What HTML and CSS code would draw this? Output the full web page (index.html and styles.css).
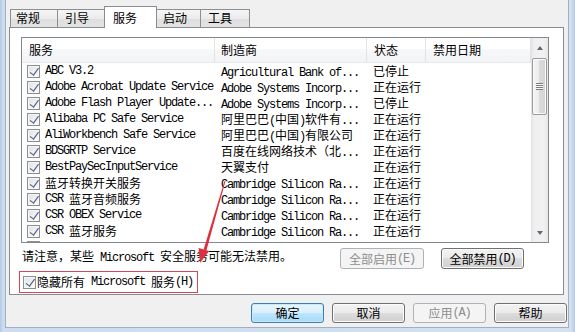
FILE: index.html
```html
<!DOCTYPE html>
<html lang="zh-CN">
<head>
<meta charset="utf-8">
<title>系统配置 - 服务</title>
<link rel="stylesheet" href="styles.css">
</head>
<body>
<div class="window">
  <div class="client">
    <div class="tabs">
      <div class="tab t1">常规</div>
      <div class="tab t2">引导</div>
      <div class="tab sel">服务</div>
      <div class="tab t4">启动</div>
      <div class="tab t5">工具</div>
    </div>
    <div class="panel">
      <div class="list">
        <div class="grid">
          <div class="hdr">
            <div class="c c1">服务</div>
            <div class="c c2">制造商</div>
            <div class="c c3">状态</div>
            <div class="c c4">禁用日期</div>
          </div>
          <div class="row"><div class="c c1"><span class="cb"></span><span class="m">ABC V3.2</span></div><div class="c c2"><span class="m">Agricultural Bank of...</span></div><div class="c c3">已停止</div><div class="c c4"></div></div>
          <div class="row"><div class="c c1"><span class="cb"></span><span class="m">Adobe Acrobat Update Service</span></div><div class="c c2"><span class="m">Adobe Systems Incorp...</span></div><div class="c c3">正在运行</div><div class="c c4"></div></div>
          <div class="row"><div class="c c1"><span class="cb"></span><span class="m">Adobe Flash Player Update...</span></div><div class="c c2"><span class="m">Adobe Systems Incorp...</span></div><div class="c c3">已停止</div><div class="c c4"></div></div>
          <div class="row"><div class="c c1"><span class="cb"></span><span class="m">Alibaba PC Safe Service</span></div><div class="c c2">阿里巴巴<span class="m">(</span>中国<span class="m">)</span>软件有<span class="m">...</span></div><div class="c c3">正在运行</div><div class="c c4"></div></div>
          <div class="row"><div class="c c1"><span class="cb"></span><span class="m">AliWorkbench Safe Service</span></div><div class="c c2">阿里巴巴<span class="m">(</span>中国<span class="m">)</span>有限公司</div><div class="c c3">正在运行</div><div class="c c4"></div></div>
          <div class="row"><div class="c c1"><span class="cb"></span><span class="m">BDSGRTP Service</span></div><div class="c c2">百度在线网络技术（北<span class="m">...</span></div><div class="c c3">正在运行</div><div class="c c4"></div></div>
          <div class="row"><div class="c c1"><span class="cb"></span><span class="m">BestPaySecInputService</span></div><div class="c c2">天翼支付</div><div class="c c3">正在运行</div><div class="c c4"></div></div>
          <div class="row"><div class="c c1"><span class="cb"></span>蓝牙转换开关服务</div><div class="c c2"><span class="m">Cambridge Silicon Ra...</span></div><div class="c c3">正在运行</div><div class="c c4"></div></div>
          <div class="row"><div class="c c1"><span class="cb"></span><span class="m">CSR </span>蓝牙音频服务</div><div class="c c2"><span class="m">Cambridge Silicon Ra...</span></div><div class="c c3">正在运行</div><div class="c c4"></div></div>
          <div class="row"><div class="c c1"><span class="cb"></span><span class="m">CSR OBEX Service</span></div><div class="c c2"><span class="m">Cambridge Silicon Ra...</span></div><div class="c c3">正在运行</div><div class="c c4"></div></div>
          <div class="row"><div class="c c1"><span class="cb"></span><span class="m">CSR </span>蓝牙服务</div><div class="c c2"><span class="m">Cambridge Silicon Ra...</span></div><div class="c c3">正在运行</div><div class="c c4"></div></div>
          <div class="row"><div class="c c1"><span class="cb"></span></div><div class="c c2"></div><div class="c c3"></div><div class="c c4"></div></div>
        </div>
        <div class="scroll">
          <div class="sbtn"><span class="up"></span></div>
          <div class="track">
            <div class="thumb"><span class="grip"></span></div>
          </div>
          <div class="sbtn"><span class="down"></span></div>
        </div>
      </div>
      <div class="noterow">
        <div class="note">请注意，某些<span class="m"> Microsoft </span>安全服务可能无法禁用。</div>
        <div class="btn dis w84">全部启用<span class="m">(E)</span></div>
        <div class="btn w83">全部禁用<span class="m">(D)</span></div>
      </div>
      <div class="hide"><span class="cb"></span>隐藏所有<span class="m"> Microsoft </span>服务<span class="m">(H)</span></div>
    </div>
    <div class="footer">
      <div class="btn def">确定</div>
      <div class="btn">取消</div>
      <div class="btn dis">应用<span class="m">(A)</span></div>
      <div class="btn">帮助</div>
    </div>
  </div>
  <svg class="arrow" width="575" height="332" viewBox="0 0 575 332">
    <polygon points="225.5,181.1 224.5,180.9 203.6,249.6 206.4,250.4" fill="#dc2f3f"/>
    <polygon points="200,263 198.6,248 209.2,251" fill="#dc2f3f"/>
  </svg>
</div>
</body>
</html>
```
FILE: styles.css
```css
* { box-sizing: border-box; }
html, body { margin: 0; padding: 0; }
body {
  width: 575px;
  height: 332px;
  overflow: hidden;
  font-family: "Noto Sans CJK SC", "Noto Sans", sans-serif;
  font-size: 12px;
  line-height: 16px;
  color: #000;
}
.m {
  font-family: "Liberation Mono", "Noto Sans CJK SC", monospace;
  font-size: 12px;
  letter-spacing: -1.2px;
  white-space: pre;
}
.window {
  position: relative;
  width: 575px;
  height: 332px;
  padding: 0 6px 4px 5px;
  background: linear-gradient(to right, #b4c9e3, #cddcef 3px, #d3e1f1 calc(100% - 4px), #b4c9e3);
}
.client {
  height: 328px;
  background: #f0f0f0;
  border: 1px solid #9fb0c4;
  border-top: 0;
  padding-left: 3px;
  display: flex;
  flex-direction: column;
}
/* tabs */
.tabs {
  display: flex;
  align-items: flex-end;
  height: 27px;
  margin-left: 1px;
  position: relative;
  z-index: 1;
}
.tab {
  height: 18px;
  border: 1px solid #8c8e94;
  border-bottom: 0;
  margin-right: -1px;
  padding: 0 0 0 5px;
  line-height: 16px;
  background: linear-gradient(#f5f5f5, #ebebeb 50%, #dedede 50%, #e3e3e3);
}
.t1 { width: 48px; }
.t2 { width: 48px; padding-left: 7px; }
.tab.sel {
  width: 53px;
  height: 22px;
  margin-bottom: -1px;
  padding-top: 3px;
  padding-left: 8px;
  background: #fff;
  border-color: #898c95;
  position: relative;
  z-index: 2;
}
.t4 { width: 45px; padding-left: 6px; }
.t5 { width: 50px; padding-left: 7px; }
/* panel */
.panel {
  width: 555px;
  height: 268px;
  border: 1px solid #898c95;
  background: #fff;
  padding: 9px 0 0 11px;
  display: flex;
  flex-direction: column;
}
.list {
  width: 528px;
  height: 206px;
  flex: none;
  border: 1px solid #828790;
  display: flex;
  overflow: hidden;
}
.grid {
  width: 509px;
  height: 204px;
  overflow: hidden;
}
.hdr {
  display: flex;
  height: 25px;
  background: linear-gradient(#ffffff, #ffffff 45%, #f7f8fa 45%, #f3f4f6);
  border-bottom: 1px solid #e6e8eb;
}
.hdr .c {
  line-height: 24px;
  padding-left: 7px;
  border-right: 1px solid #e2e3e5;
}
.hdr .c2 { padding-left: 6px; }
.c { flex: none; white-space: nowrap; overflow: hidden; }
.c1 { width: 193px; }
.c2 { width: 152px; }
.c3 { width: 59px; }
.c4 { width: 105px; }
.row {
  display: flex;
  height: 16px;
  line-height: 16px;
}
.row .c1 { display: flex; align-items: center; padding-left: 5px; }
.row .c2, .row .c3 { padding-left: 6px; }
.cb {
  position: relative;
  flex: none;
  width: 13px;
  height: 13px;
  border: 1px solid #8e8f8f;
  background: linear-gradient(135deg, #dfe2e7, #f1f2f4 60%, #fdfdfd);
  box-shadow: inset 0 0 0 1px #f6f6f6;
  margin-right: 5px;
}
.cb::after {
  content: "";
  position: absolute;
  left: 3.5px;
  top: 0.5px;
  width: 3.5px;
  height: 7.5px;
  border: solid #475a86;
  border-width: 0 1.8px 1.8px 0;
  transform: rotate(36deg);
}
/* scrollbar */
.scroll {
  width: 17px;
  height: 204px;
  display: flex;
  flex-direction: column;
  background: linear-gradient(to right, #e3e3e3, #efefef 3px, #f1f1f1 13px, #e6e6e6);
}
.sbtn {
  height: 19px;
  display: flex;
  align-items: center;
  justify-content: center;
}
.up, .down {
  width: 0;
  height: 0;
  border-left: 3.5px solid transparent;
  border-right: 3.5px solid transparent;
}
.up { border-bottom: 4px solid #5e6a78; }
.down { border-top: 4px solid #5e6a78; }
.track { flex: 1; padding: 1px 1px 0 1px; }
.thumb {
  height: 57px;
  border: 1px solid #9a9a9a;
  border-radius: 2px;
  background: linear-gradient(to right, #f4f4f4, #ebebeb 50%, #dadada 50%, #d4d4d4);
  box-shadow: inset 0 0 0 1px #fbfbfb;
  display: flex;
  align-items: center;
  justify-content: center;
}
.grip {
  width: 7px;
  height: 7px;
  background: repeating-linear-gradient(#7d7d7d 0 1px, #f7f7f7 1px 2px);
}
/* notice row */
.noterow {
  display: flex;
  align-items: flex-start;
  margin-top: 5px;
  height: 21px;
  padding-left: 1px;
}
.note { white-space: nowrap; }
.btn {
  height: 21px;
  border: 1px solid #707070;
  border-radius: 3px;
  background: linear-gradient(#f2f2f2, #ebebeb 50%, #dddddd 50%, #cfcfcf);
  box-shadow: inset 0 0 0 1px #fbfbfb;
  display: flex;
  align-items: center;
  justify-content: center;
  white-space: nowrap;
  line-height: 16px;
}
.btn.dis {
  border-color: #adb2b5;
  background: #f4f4f4;
  box-shadow: none;
  color: #8d8d8d;
}
.w84 { width: 84px; margin-left: auto; }
.w83 { width: 83px; margin-left: 17px; margin-right: 39px; }
.hide {
  display: flex;
  align-items: center;
  width: 179px;
  height: 22px;
  margin: 2px 0 0 -2px;
  padding-left: 3px;
  border: 1px solid #d2485a;
  white-space: nowrap;
}
.hide .cb { margin-right: 1px; }
/* footer */
.footer {
  display: flex;
  justify-content: flex-end;
  gap: 8px;
  margin-top: 8px;
  padding-right: 1px;
}
.footer .btn { width: 73px; height: 20px; }
.btn.def {
  border-color: #3c7fb1;
  background: linear-gradient(#eaf6fd, #d9f0fc 50%, #bee6fd 50%, #a7d9f5);
  box-shadow: inset 0 0 0 1px #c6e9fb;
}
.arrow {
  position: absolute;
  left: 0;
  top: 0;
  pointer-events: none;
  z-index: 5;
}
```
